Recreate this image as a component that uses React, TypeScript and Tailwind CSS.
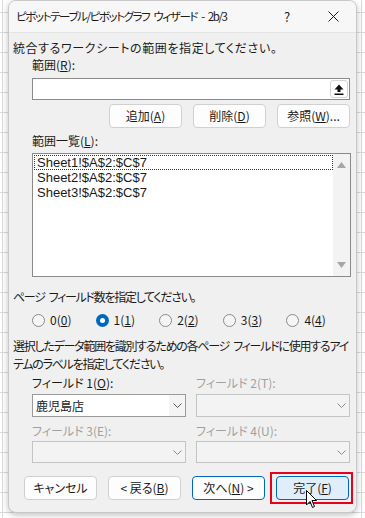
import React from 'react';

const jp = "font-['Yu_Gothic_UI','Noto_Sans_CJK_JP',sans-serif] [font-feature-settings:'palt']";

function Btn({ children, variant = 'normal' }: { children: React.ReactNode; variant?: 'normal' | 'default' | 'hover' }) {
  const cls =
    variant === 'hover'
      ? 'border-[#0067c0] bg-[#e0eef9]'
      : variant === 'default'
      ? 'border-[#0067c0] bg-[#fdfdfd]'
      : 'border-[#d0d0d0] bg-[#fdfdfd]';
  return (
    <div className={`flex h-6 w-[73px] items-center justify-center rounded-[4px] border text-[12px] text-[#1a1a1a] ${cls}`}>
      {children}
    </div>
  );
}

function Radio({ label, keyChar, checked }: { label: string; keyChar: string; checked?: boolean }) {
  return (
    <div className="flex w-[69px] items-center gap-[5px]">
      {checked ? (
        <span className="flex h-[13px] w-[13px] items-center justify-center rounded-full bg-[#0067c0]">
          <span className="h-[5px] w-[5px] rounded-full bg-white" />
        </span>
      ) : (
        <span className="h-[13px] w-[13px] rounded-full border border-[#8a8a8a] bg-[#f5f5f5]" />
      )}
      <span className="text-[12px] leading-4">
        {label}(<u>{keyChar}</u>)
      </span>
    </div>
  );
}

function Chevron({ disabled }: { disabled?: boolean }) {
  return (
    <svg width="9" height="5" viewBox="0 0 9 5" fill="none">
      <path d="M0.5 0.5 L4.5 4.5 L8.5 0.5" stroke={disabled ? '#8a8a8a' : '#555'} strokeWidth="1" />
    </svg>
  );
}

function Combo({ value, disabled, h = 'h-[23px]' }: { value?: string; disabled?: boolean; h?: string }) {
  return (
    <div
      className={`flex w-[154px] ${h} items-stretch border ${
        disabled ? 'border-[#c4c4c4] bg-[#f3f3f3]' : 'border-[#9a9a9a] bg-white'
      }`}
    >
      <div className="flex flex-1 items-center pl-[3px] text-[12px]">{value}</div>
      <div className={`flex w-[16px] items-center justify-center ${disabled ? 'bg-[#f3f3f3]' : 'bg-[#f4f4f4]'}`}>
        <Chevron disabled={disabled} />
      </div>
    </div>
  );
}

// a visible word gap that survives negative tracking
const Gap = ({ w = 'w-[4px]' }: { w?: string }) => <span className={`inline-block ${w}`} />;

export default function App() {
  return (
    <div
      className={`relative h-[518px] w-[365px] overflow-hidden bg-white pl-2 text-[#1a1a1a] ${jp} bg-[repeating-linear-gradient(to_bottom,transparent_0px,transparent_12px,#dadada_12px,#dadada_13px,transparent_13px,transparent_20px)]`}
    >
      <div className="absolute left-[2px] top-0 h-full w-px bg-[#dadada]" />
      <div className="absolute left-[361px] top-0 h-full w-px bg-[#dadada]" />

      {/* dialog */}
      <div className="relative flex h-[513px] w-[349px] flex-col overflow-hidden rounded-lg border border-[#c8c8c8] bg-[#f0f0f0] shadow-[0_2px_6px_rgba(0,0,0,0.25)]">
        {/* title bar */}
        <div className="flex h-[32px] shrink-0 items-center border-b border-[#e4e4e4] bg-[#f7f7f7] pl-[7px] text-[12px]">
          <span className="flex-1 whitespace-nowrap text-[11.5px] tracking-[-1.4px]">
            ピボットテーブル/ピボットグラフ<Gap />ウィザード<Gap />-<Gap />2b/3
          </span>
          <span className="w-[46px] text-center text-[13px]">?</span>
          <span className="flex w-[46px] items-center justify-center">
            <svg width="11" height="11" viewBox="0 0 11 11">
              <path d="M0.5 0.5 L10.5 10.5 M10.5 0.5 L0.5 10.5" stroke="#1a1a1a" strokeWidth="1" />
            </svg>
          </span>
        </div>

        <div className="flex flex-col pl-[4px] pr-[6px] text-[12px]">
          <div className="mt-[7px] whitespace-nowrap leading-4 tracking-[0.6px]">統合するワークシートの範囲を指定してください。</div>

          <div className="ml-[19px] flex flex-col">
            <div className="mt-[1px] leading-4">
              範囲(<u>R</u>):
            </div>
            <div className="mt-[5px] flex h-[22px] w-[318px] items-center justify-end border border-[#8a8a8a] bg-white pr-[1px]">
              <div className="flex h-[18px] w-[18px] items-center justify-center rounded-[3px] border border-[#d4d4d4] bg-white">
                <svg width="10" height="11" viewBox="0 0 10 11">
                  <path d="M5 0.5 L9.5 5.5 L6.5 5.5 L6.5 8 L3.5 8 L3.5 5.5 L0.5 5.5 Z" fill="#111" />
                  <rect x="0.5" y="9.5" width="9" height="1.5" fill="#111" />
                </svg>
              </div>
            </div>
            <div className="mt-1 flex w-[318px] justify-end gap-[11px]">
              <Btn>
                追加(<u>A</u>)
              </Btn>
              <Btn>
                削除(<u>D</u>)
              </Btn>
              <Btn>
                参照(<u>W</u>)...
              </Btn>
            </div>

            <div className="mt-[5px] leading-4">
              範囲一覧(<u>L</u>):
            </div>
            <div className="mt-1 flex h-[124px] w-[319px] border border-[#8a8a8a] bg-white">
              <div className="flex flex-1 flex-col pl-[1px] pt-[1px] font-['Segoe_UI','Liberation_Sans',sans-serif] text-[13px] leading-[15px]">
                <div className="h-[15px] border border-dotted border-[#333] pl-[2px] leading-[13px]">Sheet1!$A$2:$C$7</div>
                <div className="h-[15px] pl-[3px]">Sheet2!$A$2:$C$7</div>
                <div className="h-[15px] pl-[3px]">Sheet3!$A$2:$C$7</div>
              </div>
              <div className="flex w-[17px] flex-col items-center justify-between bg-[#f3f3f3] py-[8px]">
                <svg width="9" height="6" viewBox="0 0 9 6">
                  <path d="M0 6 L4.5 0 L9 6 Z" fill="#a6a6a6" />
                </svg>
                <svg width="9" height="6" viewBox="0 0 9 6">
                  <path d="M0 0 L4.5 6 L9 0 Z" fill="#a6a6a6" />
                </svg>
              </div>
            </div>
          </div>

          <div className="mt-3 whitespace-nowrap leading-4 tracking-[-1.3px]">
            ページ<Gap />フィールド数を指定してください。
          </div>
          <div className="ml-[19px] mt-[7px] flex">
            <Radio label="0" keyChar="0" />
            <Radio label="1" keyChar="1" checked />
            <Radio label="2" keyChar="2" />
            <Radio label="3" keyChar="3" />
            <Radio label="4" keyChar="4" />
          </div>

          <div className="mt-[9px] whitespace-nowrap leading-[18px] tracking-[-1.25px]">
            選択したデータ範囲を識別するための各ページ<Gap />フィールドに使用するアイ
            <br />
            テムのラベルを指定してください。
          </div>

          <div className="ml-[19px] mt-[2px] grid w-[318px] grid-cols-2 gap-x-[10px]">
            <div className="leading-4">
              フィールド 1(<u>O</u>):
            </div>
            <div className="leading-4 text-[#a0a0a0]">フィールド 2(T):</div>
            <div className="mt-[3px]">
              <Combo value="鹿児島店" />
            </div>
            <div className="mt-[3px]">
              <Combo disabled />
            </div>
            <div className="mt-[6px] leading-4 text-[#a0a0a0]">フィールド 3(E):</div>
            <div className="mt-[6px] leading-4 text-[#a0a0a0]">フィールド 4(U):</div>
            <div className="mt-[2px]">
              <Combo disabled h="h-[22px]" />
            </div>
            <div className="mt-[2px]">
              <Combo disabled h="h-[22px]" />
            </div>
          </div>

          <div className="ml-[11px] mt-[13px] flex gap-[11px]">
            <Btn>キャンセル</Btn>
            <Btn>
              &lt; 戻る(<u>B</u>)
            </Btn>
            <Btn variant="default">
              次へ(<u>N</u>) &gt;
            </Btn>
            <div className="relative">
              <Btn variant="hover">
                完了(<u>F</u>)
              </Btn>
              <div className="absolute -left-[6px] -top-[4px] h-[32px] w-[83px] border-2 border-[#e8001c]" />
            </div>
          </div>
        </div>
      </div>

      {/* mouse cursor */}
      <svg className="absolute left-[306px] top-[490px]" width="12" height="19" viewBox="0 0 12 19">
        <path d="M0.5 0.5 L0.5 15 L4 11.5 L6.5 17.5 L8.5 16.5 L6 10.5 L10.5 10.5 Z" fill="white" stroke="black" strokeWidth="1" strokeLinejoin="round" />
      </svg>
    </div>
  );
}
